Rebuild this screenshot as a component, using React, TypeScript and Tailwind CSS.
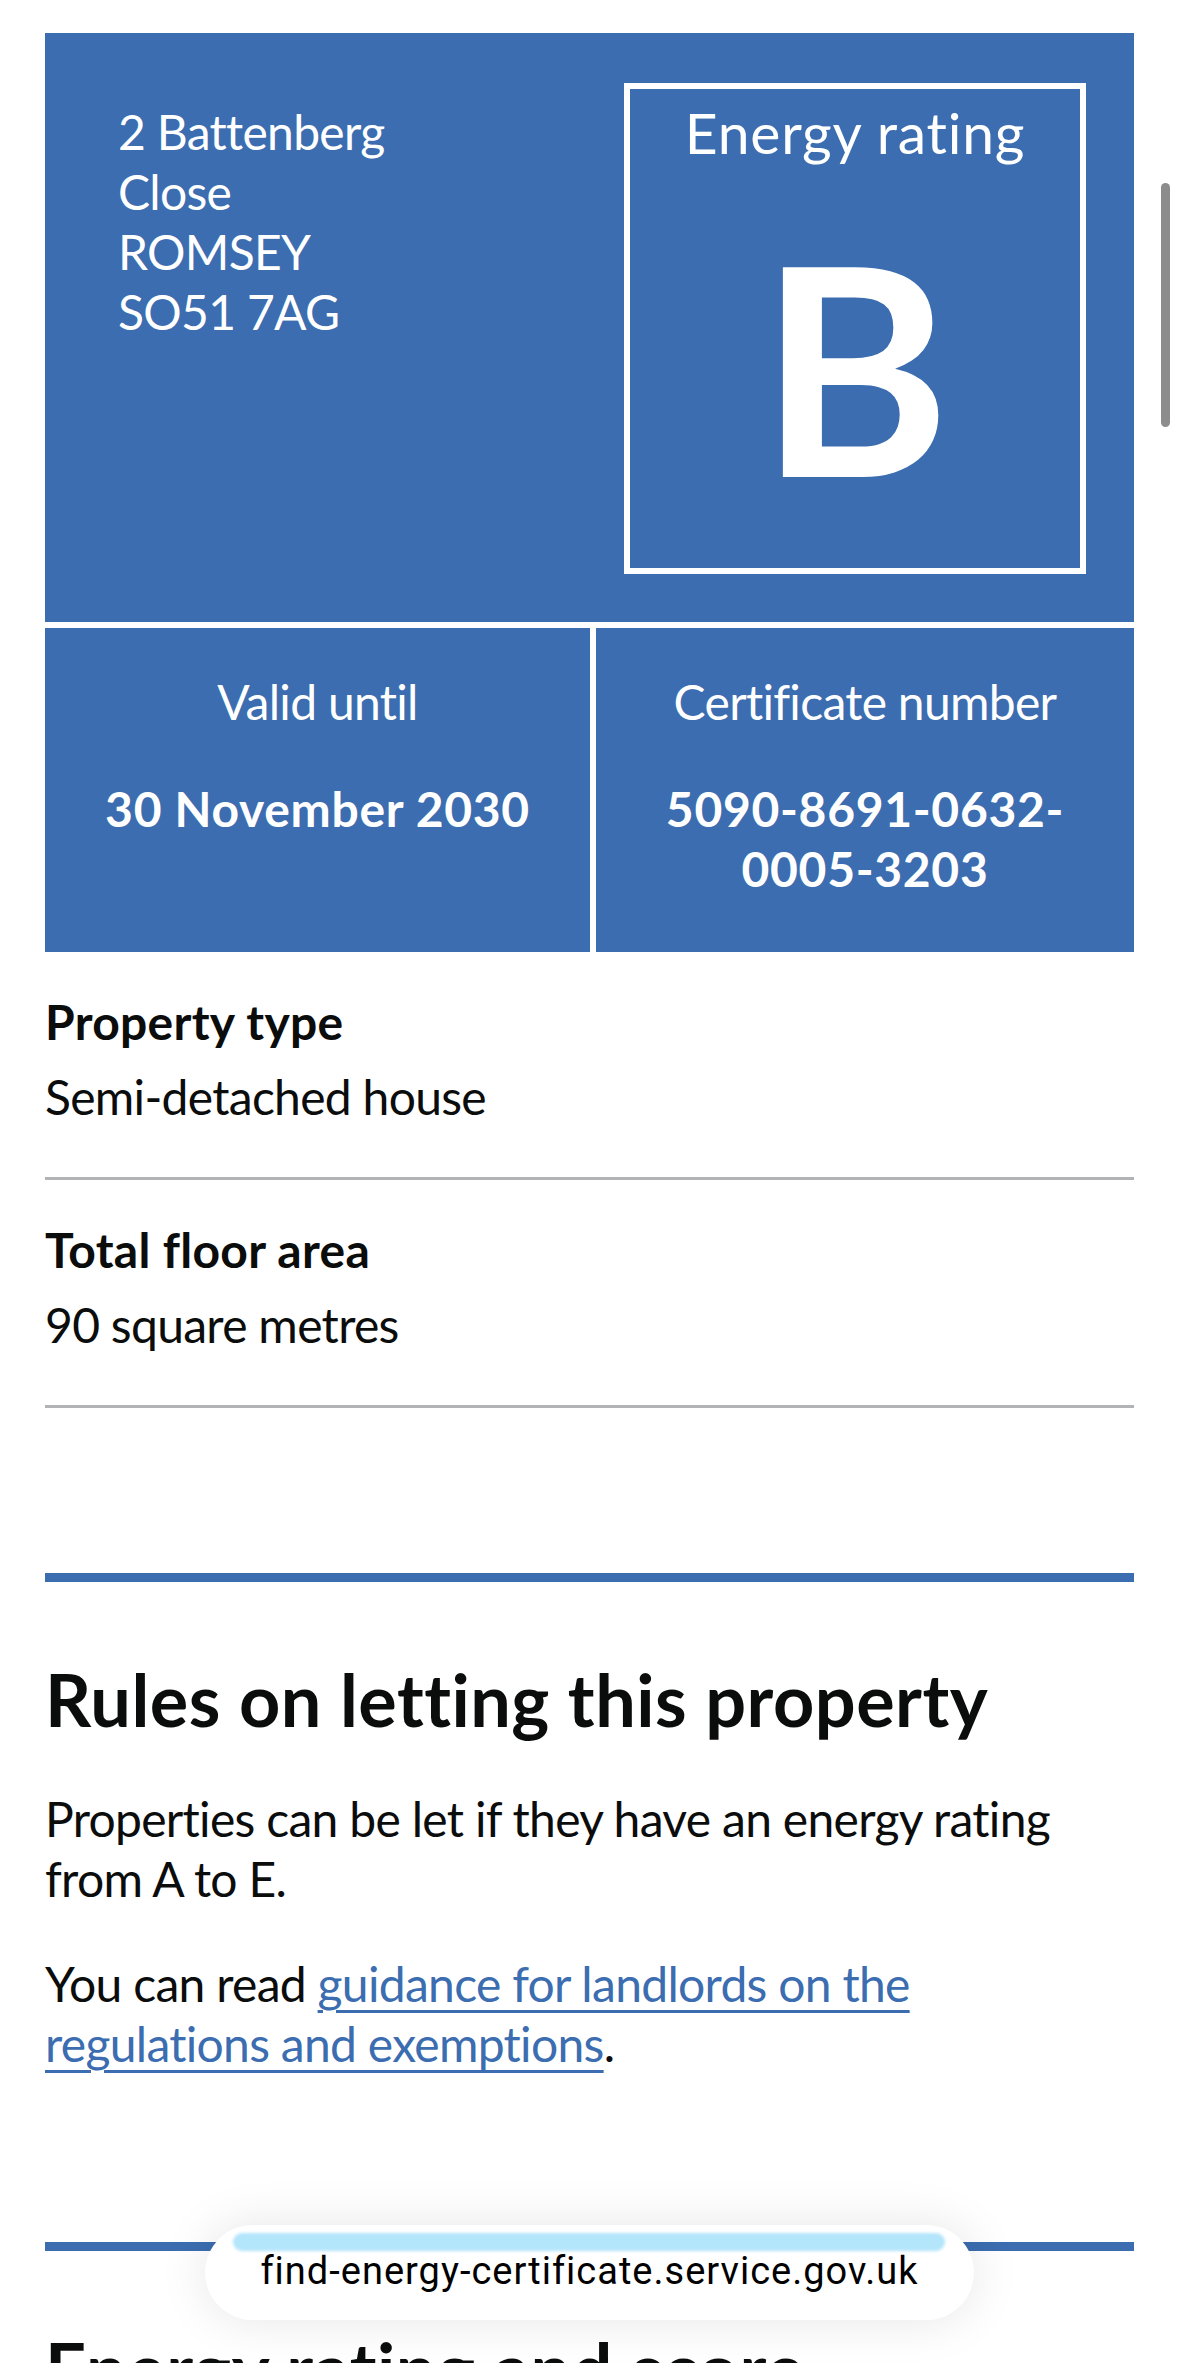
import React from "react";

function Row({ k, v }: { k: string; v: string }) {
  return (
    <div className="pt-[40px] pb-[50px] border-b-[3px] border-[#b1b4b6]">
      <div className="font-bold tracking-[0.3px] leading-[60px]">{k}</div>
      <div className="mt-[15px] leading-[60px] tracking-[-0.7px]">{v}</div>
    </div>
  );
}

export default function App() {
  return (
    <div className="relative w-full h-[2363px] overflow-hidden bg-white text-[#0b0c0c] font-['Lato',sans-serif] text-[48px]">
      <div className="px-[45px] pt-[33px]">
        {/* Summary panel */}
        <div className="flex flex-col gap-[6px]">
          <div className="flex items-start justify-between bg-[#3b6db0] text-white pt-[50px] pb-[48px] pr-[48px]">
            <div className="pl-[73px] pt-[19px] leading-[60px] tracking-[-0.7px]">
              <div>2 Battenberg</div>
              <div>Close</div>
              <div>ROMSEY</div>
              <div>SO51 7AG</div>
            </div>
            <div className="w-[462px] h-[491px] border-[6px] border-white flex flex-col items-center">
              <div className="pt-[9px] text-[57px] leading-[68px] tracking-[0.8px]">Energy rating</div>
              <div className="mt-[54px] text-[290px] leading-[290px] font-bold">B</div>
            </div>
          </div>
          <div className="grid grid-cols-[545px_1fr] gap-[6px] text-white text-center">
            <div className="bg-[#3b6db0] pt-[44px] pb-[53px] px-[20px]">
              <div className="leading-[60px] tracking-[-0.7px]">Valid until</div>
              <div className="mt-[47px] leading-[60px] font-bold tracking-[0.7px]">30 November 2030</div>
            </div>
            <div className="bg-[#3b6db0] pt-[44px] pb-[53px] px-[20px]">
              <div className="leading-[60px] tracking-[-0.7px]">Certificate number</div>
              <div className="mt-[47px] leading-[60px] font-bold tracking-[0.7px]">
                5090-8691-0632-
                <br />
                0005-3203
              </div>
            </div>
          </div>
        </div>

        {/* Summary list */}
        <Row k="Property type" v="Semi-detached house" />
        <Row k="Total floor area" v="90 square metres" />

        {/* Rules section */}
        <div className="mt-[165px] border-t-[9px] border-[#3b6db0] pt-[72px]">
          <h2 className="text-[72px] leading-[90px] font-bold tracking-[0.5px]">Rules on letting this property</h2>
          <p className="mt-[45px] leading-[60px] tracking-[-0.7px]">
            Properties can be let if they have an energy rating from A to E.
          </p>
          <p className="mt-[45px] leading-[60px] tracking-[-0.7px]">
            You can read{" "}
            <a
              href="#"
              className="text-[#3b6db0] underline decoration-[3px] underline-offset-[8px]"
            >
              guidance for landlords on the regulations and exemptions
            </a>
            .
          </p>
        </div>

        {/* Energy rating section */}
        <div className="mt-[168px] border-t-[9px] border-[#3b6db0] pt-[72px]">
          <h2 className="text-[72px] leading-[90px] font-bold tracking-[0.5px]">Energy rating and score</h2>
        </div>
      </div>

      {/* Scrollbar */}
      <div className="absolute left-[1161px] top-[183px] w-[9px] h-[244px] rounded-full bg-[#8c8c8c]" />

      {/* Browser URL pill */}
      <div className="absolute left-[205px] top-[2225px] w-[769px] h-[95px] rounded-full bg-white shadow-[0_0_50px_rgba(0,0,0,0.10)]">
        <div className="absolute left-[28px] right-[29px] top-[8px] h-[18px] rounded-full bg-[#b3e5fb] blur-[1.5px]" />
        <div className="absolute inset-x-0 top-[24px] text-center font-['Roboto',sans-serif] text-[38px] leading-[44px] tracking-[1px] text-black">
          find-energy-certificate.service.gov.uk
        </div>
      </div>
    </div>
  );
}
